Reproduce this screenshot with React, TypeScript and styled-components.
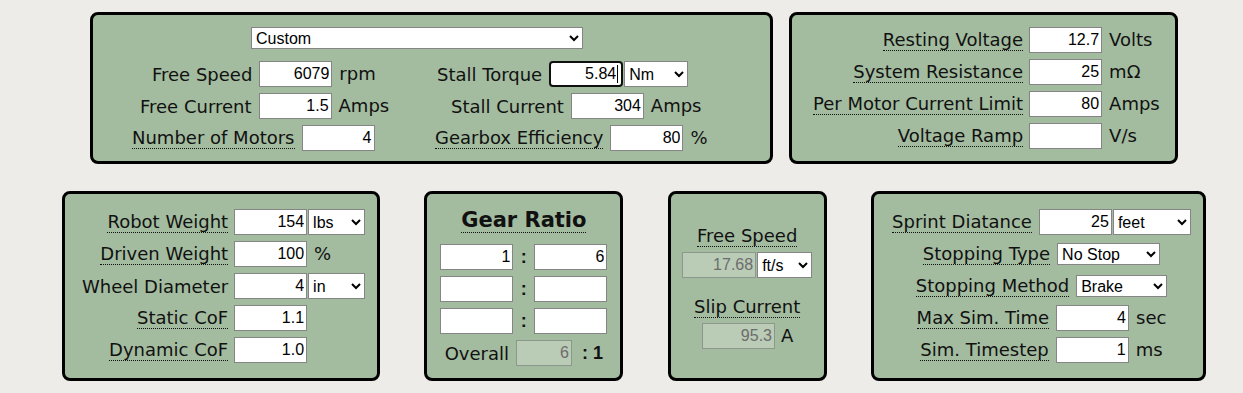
import React from 'react'
import styled, { createGlobalStyle } from 'styled-components'

const GlobalStyle = createGlobalStyle`
  html, body {
    margin: 0;
    background: #edece8;
  }
  body {
    font-family: "DejaVu Sans", Verdana, sans-serif;
    font-size: 18px;
    color: #111;
  }
`

const Page = styled.div`
  width: 1144px;
  margin-left: 62px;
  padding-top: 12px;
`

const TopRow = styled.div`
  display: flex;
  justify-content: center;
  gap: 16px;
`

const BottomRow = styled.div`
  display: flex;
  justify-content: space-between;
  margin-top: 27px;
`

const Panel = styled.div<{ $w: number; $h: number }>`
  box-sizing: border-box;
  width: ${p => p.$w}px;
  height: ${p => p.$h}px;
  background: #a3bb9f;
  border: 3px solid #000;
  border-radius: 8px;
`

const MotorPanel = styled(Panel)`
  padding-top: 12px;
`

const BatteryPanel = styled(Panel)`
  padding: 12px 0 0 21px;
`

const RobotPanel = styled(Panel)`
  padding: 15px 0 0 17px;
`

const GearPanel = styled(Panel)`
  padding-top: 14px;
  text-align: center;
`

const ResultPanel = styled(Panel)`
  padding-top: 31px;
  display: flex;
  flex-direction: column;
  align-items: center;
`

const SimPanel = styled(Panel)`
  padding: 15px 0 0 6px;
  display: flex;
  flex-direction: column;
  align-items: center;
  gap: 6px;
`

const Label = styled.span<{ $tip?: boolean }>`
  white-space: nowrap;
  line-height: normal;
  border-bottom: ${p => (p.$tip ? '1px dotted #111' : 'none')};
`

const Unit = styled.span`
  white-space: nowrap;
  line-height: normal;
  margin-bottom: 2px;
`

const Num = styled.input<{ $w?: number; $focused?: boolean }>`
  box-sizing: border-box;
  width: ${p => p.$w ?? 73}px;
  height: 26px;
  margin: 0;
  padding: 1px ${p => (p.$focused ? 5 : 2)}px 1px 2px;
  border: ${p => (p.$focused ? '2px solid #101010' : '1px solid #858585')};
  border-radius: ${p => (p.$focused ? 4 : 0)}px;
  outline: none;
  background: #fff;
  font: 16px "Liberation Sans", Arial, sans-serif;
  color: #000;
  text-align: right;

  &:disabled {
    background: #bacbb6;
    color: #6d6d6d;
    border-color: #8e978c;
  }
`

const Caret = styled.span`
  position: relative;
  display: inline-flex;

  &::after {
    content: "";
    position: absolute;
    right: 5px;
    top: 4px;
    width: 1px;
    height: 18px;
    background: #000;
  }
`

const Pick = styled.select<{ $w: number; $h?: number }>`
  box-sizing: border-box;
  width: ${p => p.$w}px;
  height: ${p => p.$h ?? 26}px;
  margin: 0;
  border: 1px solid #858585;
  border-radius: 0;
  background: #fff;
  font: 16px "Liberation Sans", Arial, sans-serif;
  color: #000;
`

const PresetPick = styled(Pick)`
  margin-left: 158px;
  display: block;
`

const Pair = styled.span`
  display: inline-flex;
  gap: 1px;
`

const MotorColumns = styled.div`
  display: flex;
  margin: 12px 0 0 39px;
`

const MotorColumn = styled.div<{ $w?: number }>`
  width: ${p => (p.$w ? `${p.$w}px` : 'auto')};
  display: flex;
  flex-direction: column;
  gap: 6px;
`

const Line = styled.div<{ $indent?: number }>`
  display: flex;
  align-items: center;
  gap: 7px;
  height: 26px;
  padding-left: ${p => p.$indent ?? 0}px;
`

const Table = styled.div`
  display: grid;
  grid-template-columns: auto auto auto;
  grid-auto-rows: 26px;
  row-gap: 6px;
  align-items: center;
  justify-content: start;
`

const Cell = styled.div<{ $gap?: number }>`
  display: flex;
  align-items: center;
  margin-left: ${p => p.$gap ?? 0}px;
`

const RightCell = styled(Cell)`
  justify-content: flex-end;
`

const Title = styled.div`
  font-weight: bold;
  font-size: 21px;
  line-height: normal;
`

const GearGrid = styled.div`
  display: grid;
  grid-template-columns: 73px 21px 73px;
  grid-auto-rows: 26px;
  row-gap: 6px;
  justify-content: center;
  align-items: center;
  margin-top: 12px;
`

const Colon = styled.span`
  font: bold 18px "Liberation Sans", Arial, sans-serif;
  text-align: center;
`

const OverallLine = styled.div`
  display: flex;
  justify-content: center;
  align-items: center;
  gap: 7px;
  height: 26px;
  margin-top: 6px;
`

const Ratio = styled.span`
  font: bold 18px "Liberation Sans", Arial, sans-serif;
  white-space: pre;
  margin-left: 3px;
`

const ResultLabel = styled(Label)`
  display: inline-block;
`

const ResultGap = styled.div<{ $h: number }>`
  height: ${p => p.$h}px;
`

const ResultLine = styled.div<{ $indent?: number }>`
  display: flex;
  align-items: center;
  gap: 6px;
  height: 26px;
  padding-left: ${p => p.$indent ?? 0}px;
`

type Row = { label: string; tip?: boolean; value: string; unit?: string; options?: string[] }

const batteryRows: Row[] = [
  { label: 'Resting Voltage', tip: true, value: '12.7', unit: 'Volts' },
  { label: 'System Resistance', tip: true, value: '25', unit: 'mΩ' },
  { label: 'Per Motor Current Limit', tip: true, value: '80', unit: 'Amps' },
  { label: 'Voltage Ramp', tip: true, value: '', unit: 'V/s' },
]

const robotRows: Row[] = [
  { label: 'Robot Weight', tip: true, value: '154', options: ['lbs', 'kg'] },
  { label: 'Driven Weight', tip: true, value: '100', unit: '%' },
  { label: 'Wheel Diameter', value: '4', options: ['in', 'cm'] },
  { label: 'Static CoF', tip: true, value: '1.1' },
  { label: 'Dynamic CoF', tip: true, value: '1.0' },
]

const FieldTable = ({ rows, pickWidth }: { rows: Row[]; pickWidth?: number }) => (
  <Table>
    {rows.map(r => (
      <React.Fragment key={r.label}>
        <RightCell>
          <Label $tip={r.tip}>{r.label}</Label>
        </RightCell>
        <Cell $gap={6}>
          <Num defaultValue={r.value} />
        </Cell>
        {r.options ? (
          <Cell $gap={1}>
            <Pick $w={pickWidth ?? 57} defaultValue={r.options[0]}>
              {r.options.map(o => <option key={o}>{o}</option>)}
            </Pick>
          </Cell>
        ) : (
          <Cell $gap={7}>{r.unit && <Unit>{r.unit}</Unit>}</Cell>
        )}
      </React.Fragment>
    ))}
  </Table>
)

const gears = [['1', '6'], ['', ''], ['', '']]

export default function App() {
  return (
    <>
      <GlobalStyle />
      <Page>
        <TopRow>
          <MotorPanel $w={683} $h={152}>
            <PresetPick $w={332} $h={22} defaultValue="Custom">
              <option>Custom</option>
              <option>CIM</option>
              <option>Mini CIM</option>
              <option>NEO</option>
              <option>Falcon 500</option>
            </PresetPick>
            <MotorColumns>
              <MotorColumn $w={303}>
                <Line $indent={20}>
                  <Label>Free Speed</Label>
                  <Num defaultValue="6079" />
                  <Unit>rpm</Unit>
                </Line>
                <Line $indent={8}>
                  <Label>Free Current</Label>
                  <Num defaultValue="1.5" />
                  <Unit>Amps</Unit>
                </Line>
                <Line>
                  <Label $tip>Number of Motors</Label>
                  <Num defaultValue="4" />
                </Line>
              </MotorColumn>
              <MotorColumn>
                <Line $indent={2}>
                  <Label>Stall Torque</Label>
                  <Pair>
                    <Caret>
                      <Num $w={74} $focused defaultValue="5.84" />
                    </Caret>
                    <Pick $w={64} defaultValue="Nm">
                      <option>Nm</option>
                      <option>in-lbs</option>
                    </Pick>
                  </Pair>
                </Line>
                <Line $indent={16}>
                  <Label>Stall Current</Label>
                  <Num defaultValue="304" />
                  <Unit>Amps</Unit>
                </Line>
                <Line>
                  <Label $tip>Gearbox Efficiency</Label>
                  <Num defaultValue="80" />
                  <Unit>%</Unit>
                </Line>
              </MotorColumn>
            </MotorColumns>
          </MotorPanel>

          <BatteryPanel $w={389} $h={152}>
            <FieldTable rows={batteryRows} />
          </BatteryPanel>
        </TopRow>

        <BottomRow>
          <RobotPanel $w={318} $h={190}>
            <FieldTable rows={robotRows} />
          </RobotPanel>

          <GearPanel $w={199} $h={190}>
            <Title>
              <Label $tip>Gear Ratio</Label>
            </Title>
            <GearGrid>
              {gears.map(([a, b], i) => (
                <React.Fragment key={i}>
                  <Num defaultValue={a} />
                  <Colon>:</Colon>
                  <Num defaultValue={b} />
                </React.Fragment>
              ))}
            </GearGrid>
            <OverallLine>
              <Label>Overall</Label>
              <Num $w={56} disabled defaultValue="6" />
              <Ratio>{': 1'}</Ratio>
            </OverallLine>
          </GearPanel>

          <ResultPanel $w={159} $h={190}>
            <ResultLabel $tip>Free Speed</ResultLabel>
            <ResultGap $h={5} />
            <ResultLine>
              <Pair>
                <Num $w={74} disabled defaultValue="17.68" />
                <Pick $w={55} defaultValue="ft/s">
                  <option>ft/s</option>
                  <option>m/s</option>
                </Pick>
              </Pair>
            </ResultLine>
            <ResultGap $h={18} />
            <ResultLabel $tip>Slip Current</ResultLabel>
            <ResultGap $h={5} />
            <ResultLine $indent={1}>
              <Num disabled defaultValue="95.3" />
              <Unit>A</Unit>
            </ResultLine>
          </ResultPanel>

          <SimPanel $w={335} $h={190}>
            <Line>
              <Label $tip>Sprint Diatance</Label>
              <Pair>
                <Num defaultValue="25" />
                <Pick $w={78} defaultValue="feet">
                  <option>feet</option>
                  <option>meters</option>
                </Pick>
              </Pair>
            </Line>
            <Line>
              <Label $tip>Stopping Type</Label>
              <Pick $w={103} $h={22} defaultValue="No Stop">
                <option>No Stop</option>
                <option>Full Stop</option>
              </Pick>
            </Line>
            <Line>
              <Label $tip>Stopping Method</Label>
              <Pick $w={91} $h={22} defaultValue="Brake">
                <option>Brake</option>
                <option>Coast</option>
              </Pick>
            </Line>
            <Line>
              <Label $tip>Max Sim. Time</Label>
              <Num defaultValue="4" />
              <Unit>sec</Unit>
            </Line>
            <Line>
              <Label $tip>Sim. Timestep</Label>
              <Num defaultValue="1" />
              <Unit>ms</Unit>
            </Line>
          </SimPanel>
        </BottomRow>
      </Page>
    </>
  )
}
